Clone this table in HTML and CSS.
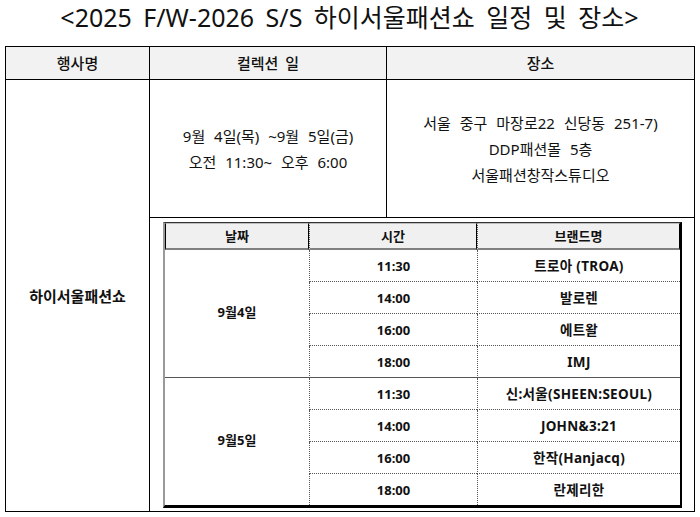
FILE: index.html
```html
<!DOCTYPE html>
<html lang="ko">
<head>
<meta charset="utf-8">
<link rel="stylesheet" href="styles.css">
</head>
<body>
<h1 class="title">&lt;2025 F/W-2026 S/S 하이서울패션쇼 일정 및 장소&gt;</h1>
<table class="main">
  <colgroup><col class="c1"><col class="c2"><col class="c3"></colgroup>
  <thead>
    <tr class="head"><th>행사명</th><th>컬렉션 일</th><th>장소</th></tr>
  </thead>
  <tbody>
    <tr class="info">
      <td class="event" rowspan="2">하이서울패션쇼</td>
      <td class="when">9월 4일(목) ~9월 5일(금)<br>오전 11:30~ 오후 6:00</td>
      <td class="where">서울 중구 마장로22 신당동 251-7)<br>DDP패션몰 5층<br>서울패션창작스튜디오</td>
    </tr>
    <tr>
      <td class="holder" colspan="2">
        <table class="sched">
          <colgroup><col class="d1"><col class="d2"><col class="d3"></colgroup>
          <thead>
            <tr><th>날짜</th><th>시간</th><th>브랜드명</th></tr>
          </thead>
          <tbody>
            <tr><td class="date" rowspan="4">9월4일</td><td class="t">11:30</td><td class="b">트로아 (TROA)</td></tr>
            <tr><td class="t">14:00</td><td class="b">발로렌</td></tr>
            <tr><td class="t">16:00</td><td class="b">에트왈</td></tr>
            <tr class="last"><td class="t">18:00</td><td class="b">IMJ</td></tr>
            <tr class="first"><td class="date second" rowspan="4">9월5일</td><td class="t">11:30</td><td class="b">신:서울(SHEEN:SEOUL)</td></tr>
            <tr><td class="t">14:00</td><td class="b">JOHN&amp;3:21</td></tr>
            <tr><td class="t">16:00</td><td class="b">한작(Hanjacq)</td></tr>
            <tr class="end"><td class="t">18:00</td><td class="b">란제리한</td></tr>
          </tbody>
        </table>
      </td>
    </tr>
  </tbody>
</table>
</body>
</html>
```
FILE: styles.css
```css
html, body {
  margin: 0;
  padding: 0;
  background: #ffffff;
}
body {
  font-family: "Noto Sans", "Noto Sans CJK KR", sans-serif;
  color: #111111;
  padding: 0 0 0 5px;
}
.title {
  margin: 0;
  height: 46px;
  width: 689px;
  text-align: center;
  font-size: 25px;
  font-weight: 400;
  line-height: 34px;
  word-spacing: 5px;
  color: #111;
}
.main {
  border-collapse: collapse;
  width: 689px;
  table-layout: fixed;
}
.main .c1 { width: 144px; }
.main .c2 { width: 237px; }
.main .c3 { width: 308px; }
.main th, .main > tbody > tr > td {
  border: 1px solid #000;
  padding: 0;
  text-align: center;
  vertical-align: middle;
}
.main .head th {
  background: #f2f2f2;
  height: 32px;
  font-size: 15px;
  font-weight: 500;
  line-height: 20px;
  word-spacing: 3px;
}
.main .info td {
  height: 136px;
  font-size: 15px;
  line-height: 26px;
  word-spacing: 5px;
}
.main .where {
  line-height: 26px;
  padding-top: 1px;
}
.main .event {
  font-weight: 700;
  font-size: 17.5px;
}
.main td.holder {
  padding: 4px 11px 3px 13px;
  vertical-align: top;
}
.sched {
  border-collapse: separate;
  border-spacing: 0;
  width: 519px;
  table-layout: fixed;
  border-top: 1px solid #333;
  border-left: 2px solid #9a9a9a;
  border-right: 2px solid #000;
  border-bottom: 3px solid #000;
  font-size: 13px;
  font-weight: 700;
}
.sched .d1 { width: 144px; }
.sched .d2 { width: 168px; }
.sched .d3 { width: 203px; }
.sched th {
  background: #f0f0f0;
  height: 24px;
  border-top: 1px solid #bdbdbd;
  border-bottom: 2px solid #808080;
  font-weight: 700;
  line-height: 16px;
  padding: 0;
}
.sched th + th {
  border-left: 1px dotted #555;
}
.sched td {
  padding: 0;
  height: 31px;
  text-align: center;
  vertical-align: middle;
  line-height: 16px;
  border-bottom: 1px dotted #555;
}
.sched td.b {
  font-size: 13.5px;
  letter-spacing: 0.3px;
}
.sched td.t,
.sched td.b {
  border-left: 1px dotted #555;
}
.sched td.date {
  border-bottom: 1px solid #555;
  padding-bottom: 4px;
}
.sched td.date.second {
  border-bottom: none;
}
.sched tr.last td {
  border-bottom: 1px solid #555;
}
.sched tr.end td {
  border-bottom: none;
}
```
